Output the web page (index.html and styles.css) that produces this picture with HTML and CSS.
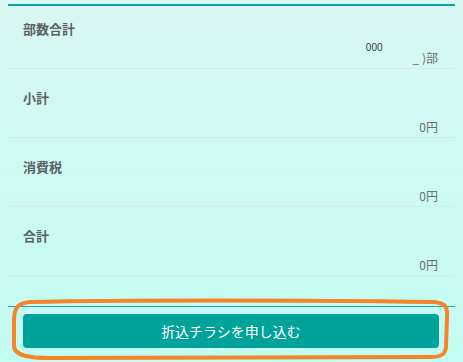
FILE: index.html
```html
<!DOCTYPE html>
<html lang="ja">
<head>
  <meta charset="UTF-8" />
  <meta name="viewport" content="width=device-width, initial-scale=1.0" />
  <title>合計</title>
  <link rel="stylesheet" href="styles.css">
</head>
<body>
  <div class="summary">
    <div class="row first">
      <div class="label">部数合計</div>
      <div class="value glitch"><span class="ghost">000</span><span>_ )部</span></div>
    </div>
    <div class="row">
      <div class="label">小計</div>
      <div class="value">0円</div>
    </div>
    <div class="row">
      <div class="label">消費税</div>
      <div class="value">0円</div>
    </div>
    <div class="row">
      <div class="label">合計</div>
      <div class="value">0円</div>
    </div>

    <div class="actions">
      <button class="apply">折込チラシを申し込む</button>
    </div>
  </div>

  <!-- hand-drawn highlight around the button -->
  <svg class="mark" width="463" height="362" viewBox="0 0 463 362">
    <path d="M30 302 C 120 300, 300 300, 434 302 C 446 303, 448 308, 447 318 L 446 346 C 446 355, 440 357, 430 357 L 50 358 C 24 358, 14 354, 14 346 L 14 320 C 14 308, 18 303, 30 302 Z"
      fill="none" stroke="#f5842a" stroke-width="4" stroke-linejoin="round" />
  </svg>
</body>
</html>
```

FILE: styles.css
```css
html, body {
  height: 100%;
}
body {
  margin: 0;
  font-family: "Noto Sans CJK JP", "Noto Sans", sans-serif;
  background: linear-gradient(#d9f7f3, #c2fcf2);
  position: relative;
  overflow: hidden;
}
.summary {
  margin: 4px 8px 0;
  border-top: 2px solid #12a0a0;
}
.row {
  padding: 19px 17px 0 15px;
  border-bottom: 1px solid #d4e9e8;
}
.row.first {
  padding-top: 13px;
}
.label {
  font-size: 13px;
  font-weight: bold;
  color: #5b6262;
  line-height: 20px;
}
.value {
  margin-top: 9px;
  font-size: 12px;
  line-height: 20px;
  color: #6b7070;
  text-align: right;
}
.glitch {
  display: flex;
  justify-content: flex-end;
  align-items: flex-start;
}
.ghost {
  font-family: "Liberation Sans", sans-serif;
  font-size: 10px;
  color: #333a48;
  line-height: 12px;
  margin-top: -6px;
  margin-right: 30px;
}
.actions {
  margin-top: 30px;
  border-top: 1px solid #21a3a3;
  padding: 7px 16px 0 15px;
}
.apply {
  display: block;
  width: 100%;
  height: 34px;
  border: none;
  border-radius: 4px;
  background-color: #00a39a;
  color: white;
  font-family: "Noto Sans CJK JP", sans-serif;
  font-size: 14px;
  cursor: pointer;
}
.mark {
  position: absolute;
  left: 0;
  top: 0;
  pointer-events: none;
}
```
